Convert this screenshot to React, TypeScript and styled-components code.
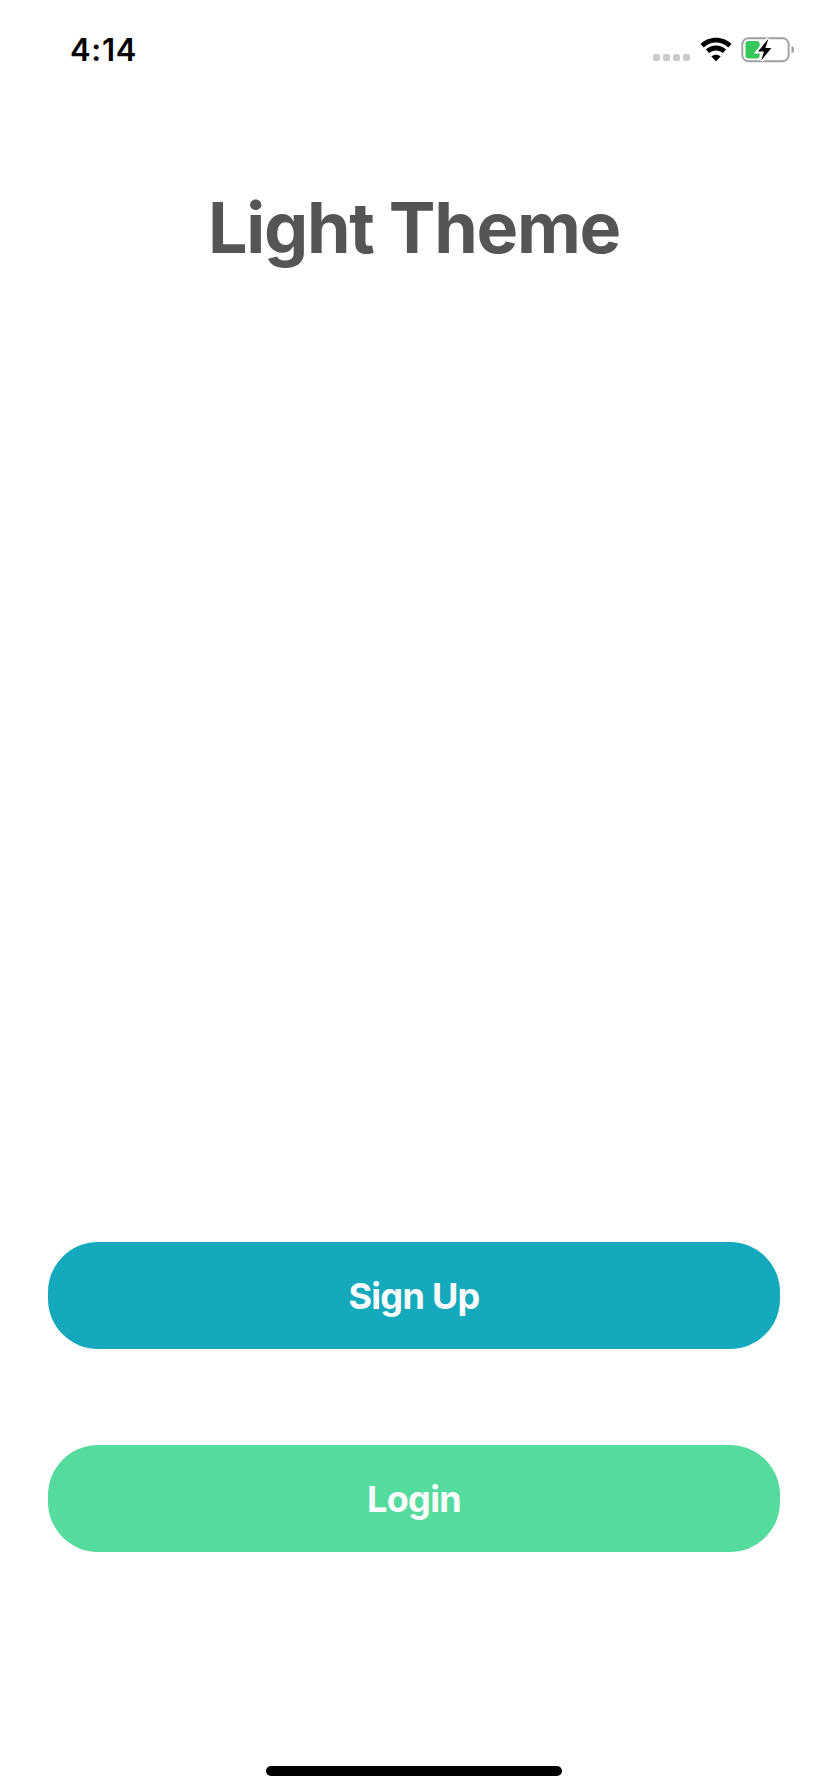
import React from 'react';
import styled, { createGlobalStyle } from 'styled-components';

const GlobalStyle = createGlobalStyle`
  * { box-sizing: border-box; }
  body {
    margin: 0;
    background: #fff;
    font-family: Inter, 'Liberation Sans', sans-serif;
  }
`;

const Screen = styled.main`
  display: flex;
  flex-direction: column;
  align-items: stretch;
  width: 828px;
  height: 1792px;
  background: #fff;
`;

const StatusBar = styled.header`
  display: flex;
  justify-content: space-between;
  align-items: center;
  height: 100px;
  padding: 0 33px 0 70px;
`;

const Clock = styled.time`
  font-size: 31px;
  line-height: 38px;
  font-weight: 600;
  letter-spacing: 0.7px;
  color: #000;
`;

const StatusIcons = styled.div`
  display: flex;
  align-items: flex-start;
  height: 26px;
`;

const SignalDots = styled.div`
  display: flex;
  gap: 3px;
  margin: 17px 10px 0 0;
`;

const Dot = styled.span`
  width: 7px;
  height: 7px;
  border-radius: 2px;
  background: #cbcbcb;
`;

const WifiIcon = styled.svg`
  display: block;
  width: 32px;
  height: 26px;
  margin-right: 9px;
`;

const BatteryIcon = styled.svg`
  display: block;
  width: 54px;
  height: 27px;
`;

const Title = styled.h1`
  margin: 85px 0 0;
  font-size: 70px;
  line-height: 86px;
  font-weight: 700;
  letter-spacing: -1.3px;
  text-align: center;
  color: #555;
`;

const Actions = styled.section`
  display: flex;
  flex-direction: column;
  gap: 96px;
  margin: auto 48px 214px;
`;

const ActionButton = styled.button<{ $color: string }>`
  height: 107px;
  padding: 0;
  border: 0;
  border-radius: 50px;
  background: ${({ $color }) => $color};
  color: #fff;
  font-family: inherit;
  font-size: 36px;
  line-height: 44px;
  font-weight: 700;
  letter-spacing: -0.7px;
`;

const HomeIndicator = styled.div`
  align-self: center;
  width: 296px;
  height: 10px;
  margin-bottom: 16px;
  border-radius: 5px;
  background: #000;
`;

export default function App() {
  return (
    <>
      <GlobalStyle />
      <Screen>
        <StatusBar>
          <Clock>4:14</Clock>
          <StatusIcons>
            <SignalDots>
              <Dot />
              <Dot />
              <Dot />
              <Dot />
            </SignalDots>
            <WifiIcon viewBox="0 0 32 26" aria-label="Wi-Fi">
              <path d="M.5 7.1C8.5-1.3 23.5-1.3 31.5 7.1L28.2 10.6C21.5 3.9 10.5 3.9 3.8 10.6Z" />
              <path d="M5.9 12.5C11.5 7.1 20.5 7.1 26.1 12.5L22.8 16C19 12.5 13 12.5 9.2 16Z" />
              <path d="M11.3 19.4C14 17.1 18 17.1 20.7 19.4L16 24.2Z" />
            </WifiIcon>
            <BatteryIcon viewBox="0 0 54 27" aria-label="Battery charging">
              <rect x="1.3" y="1.3" width="46.4" height="22.9" rx="6" fill="none" stroke="#9f9f9f" strokeWidth="1.9" />
              <path d="M50.5 9C54 10.2 54 15.2 50.5 16.5Z" fill="#9f9f9f" />
              <rect x="4.5" y="4.1" width="14.2" height="17.4" rx="3.2" fill="#35c759" />
              <path d="M27.4 1.8L17 14.5H23L20.2 23.6L30.4 11H24.400Z" fill="#000" stroke="#fff" strokeWidth="4" paintOrder="stroke" />
            </BatteryIcon>
          </StatusIcons>
        </StatusBar>
        <Title>Light Theme</Title>
        <Actions>
          <ActionButton $color="#14a9bc">Sign Up</ActionButton>
          <ActionButton $color="#55db9e">Login</ActionButton>
        </Actions>
        <HomeIndicator />
      </Screen>
    </>
  );
}
